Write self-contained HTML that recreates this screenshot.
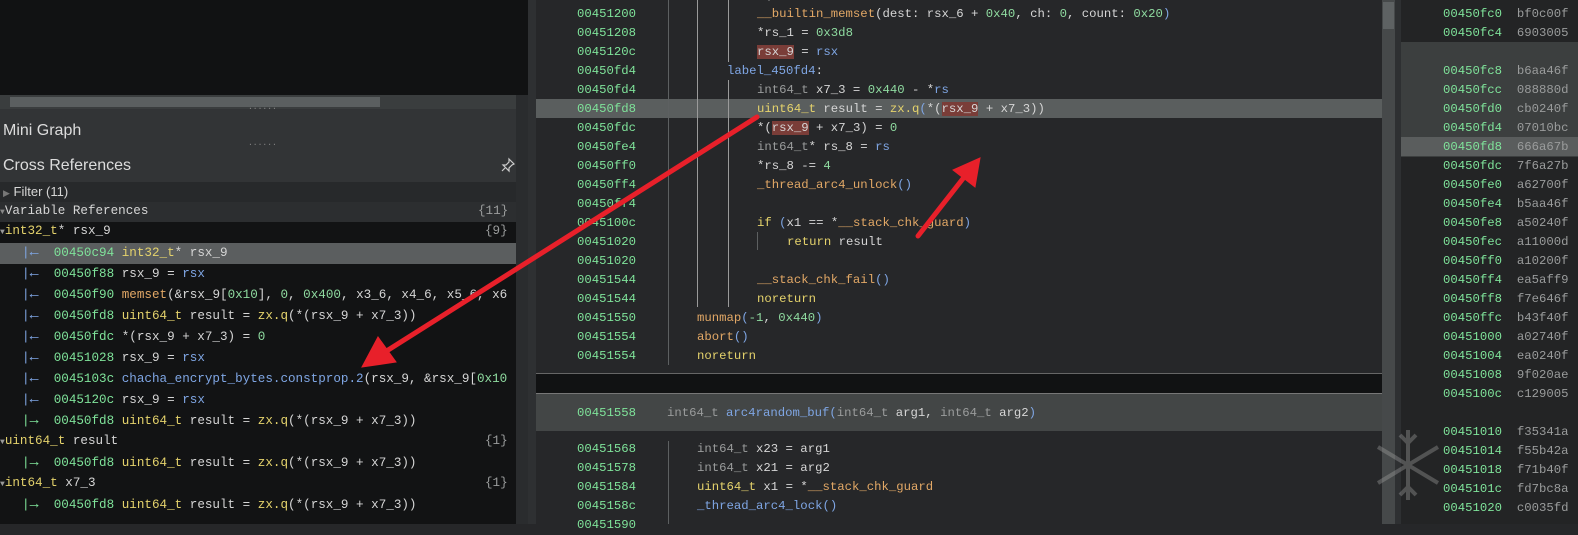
<!DOCTYPE html>
<html><head><meta charset="utf-8"><style>
*{margin:0;padding:0;box-sizing:border-box}
body{width:1578px;height:524px;overflow:hidden;background:#262729;position:relative;font-family:"Liberation Mono",monospace;}
.a{position:absolute;white-space:pre;line-height:19px;}
.m{font-size:12.3px}
.l{font-size:12.6px;line-height:21px}
.g{color:#7fe39a}.y{color:#e5d36c}.w{color:#d6d6d6}.b{color:#7fa6e4}.n{color:#8fdba0}.t{color:#9a9c9c}.o{color:#e2a866}.p{color:#aab0b8}
.hl{background:#7a3d38}
.vl{position:absolute;width:1px;background:#5d6061}
.ar{font-size:15px}
</style></head><body>
<!-- left panel -->
<div style="position:absolute;left:0;top:0;width:528px;height:95px;background:#111213"></div>
<div style="position:absolute;left:0;top:95px;width:528px;height:14px;background:#3a3d3e"></div>
<div style="position:absolute;left:10px;top:97px;width:370px;height:10px;background:#5b5f60"></div>
<div style="position:absolute;left:0;top:109px;width:528px;height:73px;background:#323436"></div>
<div class="a" style="left:3px;top:121px;font-family:'Liberation Sans',sans-serif;font-size:16px;line-height:20px;color:#dcdcdc">Mini Graph</div>
<div class="a" style="left:3px;top:156px;font-family:'Liberation Sans',sans-serif;font-size:16px;line-height:20px;color:#dcdcdc">Cross References</div>
<div class="a" style="left:248px;top:104px;font-size:8px;color:#888;line-height:8px">......</div>
<div class="a" style="left:248px;top:140px;font-size:8px;color:#888;line-height:8px">......</div>
<div style="position:absolute;left:0;top:182px;width:516px;height:20px;background:#27292b"></div>
<div class="a" style="left:3px;top:182px;font-family:'Liberation Sans',sans-serif;font-size:13px;line-height:20px;color:#d6d6d6"><span style="color:#777;font-size:9px">▶</span> Filter (11)</div>
<div style="position:absolute;left:0;top:202px;width:516px;height:20px;background:#2c2e30"></div>
<div class="a l w" style="left:0;top:201px"><span style="color:#888;font-size:8px">▼</span>Variable References</div>
<div class="a l t" style="left:478px;top:201px">{11}</div>
<div style="position:absolute;left:0;top:222px;width:516px;height:302px;background:#121314"></div>
<div style="position:absolute;left:516px;top:95px;width:12px;height:429px;background:#2a2c2e"></div>
<svg style="position:absolute;left:500px;top:157px" width="16" height="16" viewBox="0 0 16 16"><path d="M9 2l5 5-2 1-3 3v3L3 8h3l3-3z M5 11l-3 3" fill="none" stroke="#ccc" stroke-width="1.2"/></svg>
<div style="position:absolute;left:0;top:243px;width:516px;height:21px;background:#5b5e5f"></div>
<div class="a l" style="left:0;top:221px"><span style="color:#999;font-size:8px">▼</span><span class="y">int32_t</span><span class="w">* rsx_9</span></div>
<div class="a l t" style="left:485px;top:221px">{9}</div>
<div class="a l" style="left:22px;top:242px"><span class="b">|<span class="ar">←</span></span>  <span class="g">00450c94</span> <span class="y">int32_t</span><span class="w">* rsx_9</span></div>
<div class="a l" style="left:22px;top:263px"><span class="b">|<span class="ar">←</span></span>  <span class="g">00450f88</span> <span class="w">rsx_9 = </span><span class="b">rsx</span></div>
<div class="a l" style="left:22px;top:284px"><span class="b">|<span class="ar">←</span></span>  <span class="g">00450f90</span> <span class="o">memset</span><span class="w">(&amp;rsx_9[</span><span class="n">0x10</span><span class="w">], </span><span class="n">0</span><span class="w">, </span><span class="n">0x400</span><span class="w">, x3_6, x4_6, x5_6, x6</span></div>
<div class="a l" style="left:22px;top:305px"><span class="b">|<span class="ar">←</span></span>  <span class="g">00450fd8</span> <span class="y">uint64_t</span><span class="w"> result = </span><span class="y">zx.q</span><span class="w">(*(rsx_9 + x7_3))</span></div>
<div class="a l" style="left:22px;top:326px"><span class="b">|<span class="ar">←</span></span>  <span class="g">00450fdc</span> <span class="w">*(rsx_9 + x7_3) = </span><span class="n">0</span></div>
<div class="a l" style="left:22px;top:347px"><span class="b">|<span class="ar">←</span></span>  <span class="g">00451028</span> <span class="w">rsx_9 = </span><span class="b">rsx</span></div>
<div class="a l" style="left:22px;top:368px"><span class="b">|<span class="ar">←</span></span>  <span class="g">0045103c</span> <span class="b">chacha_encrypt_bytes.constprop.2</span><span class="w">(rsx_9, &amp;rsx_9[</span><span class="n">0x10</span></div>
<div class="a l" style="left:22px;top:389px"><span class="b">|<span class="ar">←</span></span>  <span class="g">0045120c</span> <span class="w">rsx_9 = </span><span class="b">rsx</span></div>
<div class="a l" style="left:22px;top:410px"><span class="g">|<span class="ar">→</span></span>  <span class="g">00450fd8</span> <span class="y">uint64_t</span><span class="w"> result = </span><span class="y">zx.q</span><span class="w">(*(rsx_9 + x7_3))</span></div>
<div class="a l" style="left:0;top:431px"><span style="color:#999;font-size:8px">▼</span><span class="y">uint64_t</span><span class="w"> result</span></div>
<div class="a l t" style="left:485px;top:431px">{1}</div>
<div class="a l" style="left:22px;top:452px"><span class="g">|<span class="ar">→</span></span>  <span class="g">00450fd8</span> <span class="y">uint64_t</span><span class="w"> result = </span><span class="y">zx.q</span><span class="w">(*(rsx_9 + x7_3))</span></div>
<div class="a l" style="left:0;top:473px"><span style="color:#999;font-size:8px">▼</span><span class="y">int64_t</span><span class="w"> x7_3</span></div>
<div class="a l t" style="left:485px;top:473px">{1}</div>
<div class="a l" style="left:22px;top:494px"><span class="g">|<span class="ar">→</span></span>  <span class="g">00450fd8</span> <span class="y">uint64_t</span><span class="w"> result = </span><span class="y">zx.q</span><span class="w">(*(rsx_9 + x7_3))</span></div>
<!-- splitter -->
<div style="position:absolute;left:528px;top:0;width:8px;height:524px;background:#2e3032"></div>
<!-- middle -->
<div style="position:absolute;left:536px;top:99px;width:846px;height:19px;background:#5a5e5e"></div>
<div class="vl" style="left:668px;top:0;height:365px"></div>
<div class="vl" style="left:697px;top:0;height:307px;background:#9a9a9a"></div>
<div class="vl" style="left:728px;top:0;height:62px;background:#9a9a9a"></div>
<div class="vl" style="left:728px;top:80px;height:227px;background:#9a9a9a"></div>
<div class="vl" style="left:757px;top:232px;height:18px"></div>
<div class="a m" style="left:577px;top:5px"><span class="g">00451200</span></div><div class="a m" style="left:757px;top:5px"><span class="o">__builtin_memset</span><span class="w">(dest: rsx_6 + </span><span class="n">0x40</span><span class="w">, ch: </span><span class="n">0</span><span class="w">, count: </span><span class="n">0x20</span><span class="b">)</span></div>
<div class="a m" style="left:757px;top:-14px"><span class="w">*(</span></div>
<div class="a m" style="left:577px;top:24px"><span class="g">00451208</span></div><div class="a m" style="left:757px;top:24px"><span class="w">*rs_1 = </span><span class="n">0x3d8</span></div>
<div class="a m" style="left:577px;top:43px"><span class="g">0045120c</span></div><div class="a m" style="left:757px;top:43px"><span class="w hl">rsx_9</span><span class="w"> = </span><span class="b">rsx</span></div>
<div class="a m" style="left:577px;top:62px"><span class="g">00450fd4</span></div><div class="a m" style="left:727px;top:62px"><span class="b">label_450fd4</span><span class="w">:</span></div>
<div class="a m" style="left:577px;top:81px"><span class="g">00450fd4</span></div><div class="a m" style="left:757px;top:81px"><span class="t">int64_t</span><span class="w"> x7_3 = </span><span class="n">0x440</span><span class="w"> - *</span><span class="b">rs</span></div>
<div class="a m" style="left:577px;top:100px"><span class="g">00450fd8</span></div><div class="a m" style="left:757px;top:100px"><span class="y">uint64_t</span><span class="w"> result = </span><span class="y">zx.q</span><span class="b">(</span><span class="w">*(</span><span class="w hl">rsx_9</span><span class="w"> + x7_3))</span></div>
<div class="a m" style="left:577px;top:119px"><span class="g">00450fdc</span></div><div class="a m" style="left:757px;top:119px"><span class="w">*(</span><span class="w hl">rsx_9</span><span class="w"> + x7_3) = </span><span class="n">0</span></div>
<div class="a m" style="left:577px;top:138px"><span class="g">00450fe4</span></div><div class="a m" style="left:757px;top:138px"><span class="t">int64_t</span><span class="w">* rs_8 = </span><span class="b">rs</span></div>
<div class="a m" style="left:577px;top:157px"><span class="g">00450ff0</span></div><div class="a m" style="left:757px;top:157px"><span class="w">*rs_8 -= </span><span class="n">4</span></div>
<div class="a m" style="left:577px;top:176px"><span class="g">00450ff4</span></div><div class="a m" style="left:757px;top:176px"><span class="o">_thread_arc4_unlock</span><span class="b">()</span></div>
<div class="a m" style="left:577px;top:195px"><span class="g">00450ff4</span></div>
<div class="a m" style="left:577px;top:214px"><span class="g">0045100c</span></div><div class="a m" style="left:757px;top:214px"><span class="y">if</span><span class="w"> </span><span class="b">(</span><span class="w">x1 == *</span><span class="o">__stack_chk_guard</span><span class="b">)</span></div>
<div class="a m" style="left:577px;top:233px"><span class="g">00451020</span></div><div class="a m" style="left:787px;top:233px"><span class="y">return</span><span class="w"> result</span></div>
<div class="a m" style="left:577px;top:252px"><span class="g">00451020</span></div>
<div class="a m" style="left:577px;top:271px"><span class="g">00451544</span></div><div class="a m" style="left:757px;top:271px"><span class="o">__stack_chk_fail</span><span class="b">()</span></div>
<div class="a m" style="left:577px;top:290px"><span class="g">00451544</span></div><div class="a m" style="left:757px;top:290px"><span class="y">noreturn</span></div>
<div class="a m" style="left:577px;top:309px"><span class="g">00451550</span></div><div class="a m" style="left:697px;top:309px"><span class="o">munmap</span><span class="b">(</span><span class="n">-1</span><span class="w">, </span><span class="n">0x440</span><span class="b">)</span></div>
<div class="a m" style="left:577px;top:328px"><span class="g">00451554</span></div><div class="a m" style="left:697px;top:328px"><span class="o">abort</span><span class="b">()</span></div>
<div class="a m" style="left:577px;top:347px"><span class="g">00451554</span></div><div class="a m" style="left:697px;top:347px"><span class="y">noreturn</span></div>
<div style="position:absolute;left:536px;top:373px;width:846px;height:21px;background:#111213;border-top:1px solid #666;border-bottom:1px solid #777"></div>
<div style="position:absolute;left:536px;top:394px;width:846px;height:37px;background:#434646"></div>
<div class="a m" style="left:577px;top:404px"><span class="g">00451558</span></div><div class="a m" style="left:667px;top:404px"><span class="t">int64_t</span> <span class="b">arc4random_buf(</span><span class="t">int64_t</span><span class="w"> arg1, </span><span class="t">int64_t</span><span class="w"> arg2</span><span class="b">)</span></div>
<div class="vl" style="left:668px;top:441px;height:83px"></div>
<div class="a m" style="left:577px;top:440px"><span class="g">00451568</span></div><div class="a m" style="left:697px;top:440px"><span class="t">int64_t</span><span class="w"> x23 = arg1</span></div>
<div class="a m" style="left:577px;top:459px"><span class="g">00451578</span></div><div class="a m" style="left:697px;top:459px"><span class="t">int64_t</span><span class="w"> x21 = arg2</span></div>
<div class="a m" style="left:577px;top:478px"><span class="g">00451584</span></div><div class="a m" style="left:697px;top:478px"><span class="y">uint64_t</span><span class="w"> x1 = *</span><span class="o">__stack_chk_guard</span></div>
<div class="a m" style="left:577px;top:497px"><span class="g">0045158c</span></div><div class="a m" style="left:697px;top:497px"><span class="b">_thread_arc4_lock()</span></div>
<div class="a m" style="left:577px;top:516px"><span class="g">00451590</span></div>
<!-- scrollbar -->
<div style="position:absolute;left:1382px;top:0;width:13px;height:524px;background:#46494a"></div>
<div style="position:absolute;left:1383px;top:2px;width:11px;height:27px;background:#5e6263"></div>
<div style="position:absolute;left:1395px;top:0;width:6px;height:524px;background:#2e3032"></div>
<!-- right pane -->
<div style="position:absolute;left:1401px;top:0;width:177px;height:524px;background:#232425"></div>
<div style="position:absolute;left:1401px;top:42px;width:177px;height:115px;background:#3c3f3f"></div>
<div style="position:absolute;left:1401px;top:137px;width:177px;height:19px;background:#5a5d5d"></div>
<div class="a m" style="left:1443px;top:5px;line-height:19px"><span class="g">00450fc0</span>  <span class="t">bf0c00f</span>
<span class="g">00450fc4</span>  <span class="t">6903005</span>

<span class="g">00450fc8</span>  <span class="t">b6aa46f</span>
<span class="g">00450fcc</span>  <span class="t">088880d</span>
<span class="g">00450fd0</span>  <span class="t">cb0240f</span>
<span class="g">00450fd4</span>  <span class="t">07010bc</span>
<span class="g">00450fd8</span>  <span class="t">666a67b</span>
<span class="g">00450fdc</span>  <span class="t">7f6a27b</span>
<span class="g">00450fe0</span>  <span class="t">a62700f</span>
<span class="g">00450fe4</span>  <span class="t">b5aa46f</span>
<span class="g">00450fe8</span>  <span class="t">a50240f</span>
<span class="g">00450fec</span>  <span class="t">a11000d</span>
<span class="g">00450ff0</span>  <span class="t">a10200f</span>
<span class="g">00450ff4</span>  <span class="t">ea5aff9</span>
<span class="g">00450ff8</span>  <span class="t">f7e646f</span>
<span class="g">00450ffc</span>  <span class="t">b43f40f</span>
<span class="g">00451000</span>  <span class="t">a02740f</span>
<span class="g">00451004</span>  <span class="t">ea0240f</span>
<span class="g">00451008</span>  <span class="t">9f020ae</span>
<span class="g">0045100c</span>  <span class="t">c129005</span>

<span class="g">00451010</span>  <span class="t">f35341a</span>
<span class="g">00451014</span>  <span class="t">f55b42a</span>
<span class="g">00451018</span>  <span class="t">f71b40f</span>
<span class="g">0045101c</span>  <span class="t">fd7bc8a</span>
<span class="g">00451020</span>  <span class="t">c0035fd</span></div>
<!-- watermark -->
<svg style="position:absolute;left:1368px;top:425px;opacity:.35" width="80" height="80" viewBox="0 0 80 80"><g stroke="#aaa" stroke-width="4" fill="none"><path d="M40 5v70M10 22l60 36M10 58l60-36M32 10l8 8 8-8M32 70l8-8 8 8"/></g></svg>
<!-- red arrows -->
<svg style="position:absolute;left:0;top:0" width="1578" height="524"><g stroke="#e8202a" stroke-width="5" stroke-linecap="round" fill="#e8202a"><line x1="757" y1="117" x2="385" y2="352"/><polygon points="362,367 378,337 396,362" stroke-width="1"/><line x1="918" y1="236" x2="965" y2="176"/><polygon points="980,158 953,170 975,187" stroke-width="1"/></g></svg>
</body></html>
